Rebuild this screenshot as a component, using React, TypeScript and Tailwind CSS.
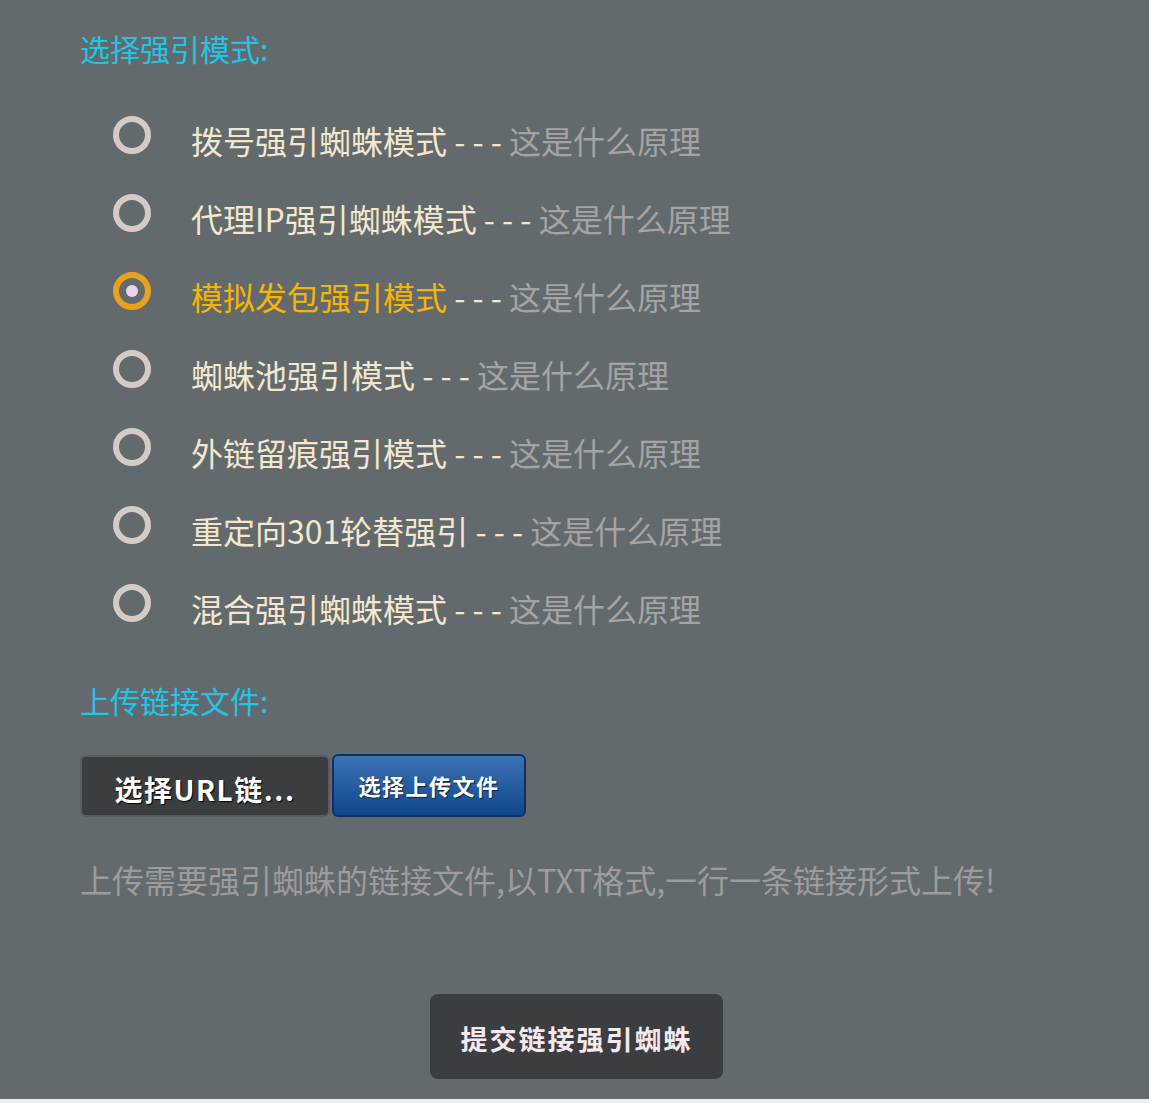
const font = { fontFamily: '"Noto Sans CJK SC", "Noto Sans", sans-serif' };

const modes = [
  "拨号强引蜘蛛模式",
  "代理IP强引蜘蛛模式",
  "模拟发包强引模式",
  "蜘蛛池强引模式",
  "外链留痕强引模式",
  "重定向301轮替强引",
  "混合强引蜘蛛模式",
];

function Radio({ checked }: { checked: boolean }) {
  return checked ? (
    <span className="-mt-[10px] flex h-[38px] w-[38px] shrink-0 items-center justify-center rounded-full border-[6px] border-[#eaa11f]">
      <span className="h-[12px] w-[12px] rounded-full bg-[#ecd3f0]" />
    </span>
  ) : (
    <span className="-mt-[10px] block h-[38px] w-[38px] shrink-0 rounded-full border-[6px] border-[#d6cbc4]" />
  );
}

export default function App() {
  const selected = 2;
  return (
    <div className="min-h-screen bg-[#eeeeee]" style={font}>
      <div className="h-[1099px] bg-[#636a6d] pl-[80px] pt-[26px]">
        <h2 className="text-[30px] leading-[45px] text-[#22c5e5]">选择强引模式:</h2>

        <ul className="mt-[30px]">
          {modes.map((m, i) => (
            <li key={m} className="flex h-[78px] items-center pl-[33px]">
              <Radio checked={i === selected} />
              <span className="ml-[40px] text-[32px] leading-[45px]">
                <span className={i === selected ? "text-[#f6b500]" : "text-[#f3e7cd]"}>{m}</span>
                <span className="text-[#f3e7cd]"> - - - </span>
                <span className="text-[#a4a4a4]">这是什么原理</span>
              </span>
            </li>
          ))}
        </ul>

        <h2 className="mt-[31px] text-[30px] leading-[45px] text-[#22c5e5]">上传链接文件:</h2>

        <div className="mt-[31px] flex items-center gap-[2px]">
          <div className="flex h-[62px] w-[250px] items-center justify-center rounded-[6px] border-2 border-[#5c5c5c] bg-[#3b3e41] pt-[6px]">
            <span className="text-[28px] font-bold tracking-[1.5px] text-white [text-shadow:1px_1px_1px_#000]">选择URL链...</span>
          </div>
          <div className="flex h-[63px] w-[194px] items-center justify-center rounded-[6px] border-2 border-[#0d3262] bg-gradient-to-b from-[#3b74b6] to-[#10468a]">
            <span className="text-[22px] font-bold tracking-[1.5px] text-white [text-shadow:1px_1px_1px_#0a2447]">选择上传文件</span>
          </div>
        </div>

        <p className="mt-[40px] text-[32px] leading-[45px] text-[#9c9c9c]">
          上传需要强引蜘蛛的链接文件,以TXT格式,一行一条链接形式上传!
        </p>

        <div className="mt-[92px] flex justify-center pr-[76px]">
          <button className="flex h-[85px] w-[293px] items-center justify-center rounded-[8px] bg-[#3b3e41] pt-[5px] text-[27px] font-bold tracking-[2px] text-[#f5e9ef]">
            提交链接强引蜘蛛
          </button>
        </div>
      </div>
    </div>
  );
}
